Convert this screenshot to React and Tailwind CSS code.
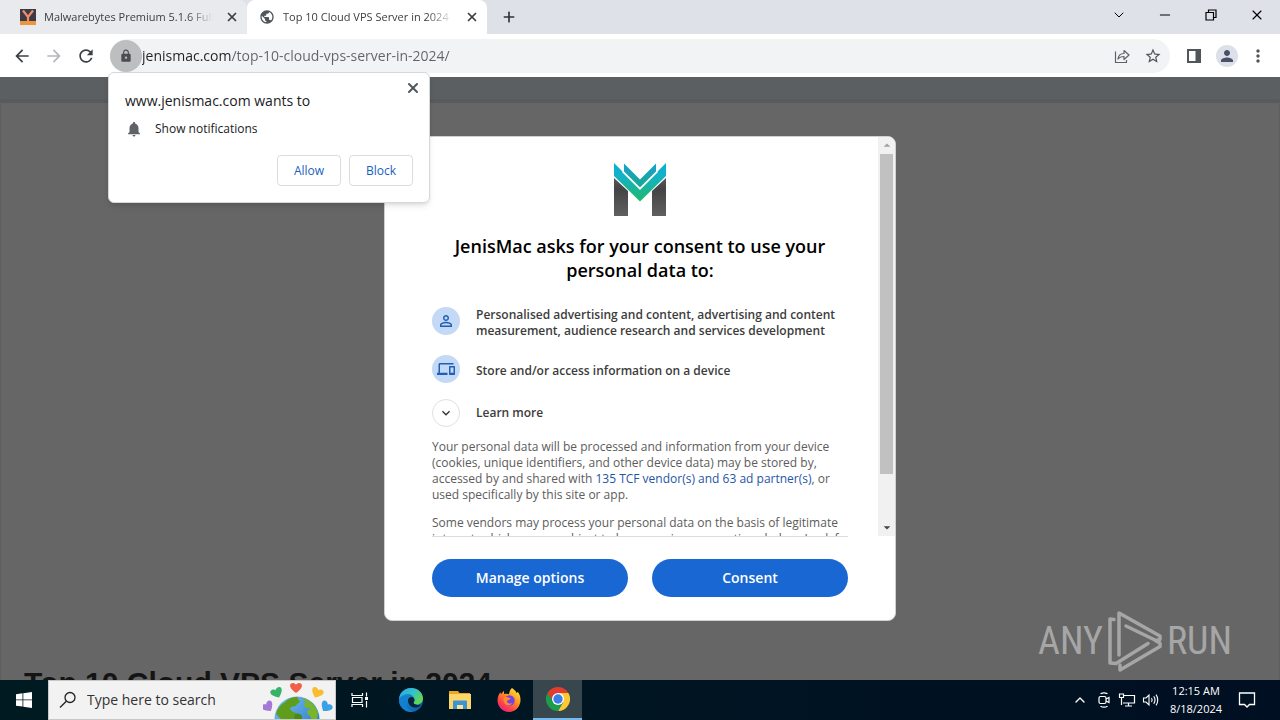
import { LuX, LuPlus, LuChevronDown, LuChevronUp, LuMinus } from "react-icons/lu";
import {
  MdArrowBack,
  MdArrowForward,
  MdRefresh,
  MdLock,
  MdStarBorder,
  MdPerson,
  MdPersonOutline,
  MdMoreVert,
  MdNotifications,
  MdPublic,
  MdDevices,
  MdExpandMore,
  MdArrowDropUp,
  MdArrowDropDown,
} from "react-icons/md";

const MalwareIcon = () => (
  <svg viewBox="0 0 16 16" className="size-4 shrink-0">
    <rect width="16" height="16" fill="#3b3a45" />
    <rect y="12" width="16" height="4" fill="#f0953a" />
    <path d="M3 1.500L8 8l5-6.500M8 7.500V12" fill="none" stroke="#f28c6a" strokeWidth="2.200" />
  </svg>
);

const ShareIcon = () => (
  <svg viewBox="0 0 16 16" className="size-4" fill="none" stroke="#5f6368" strokeWidth="1.200">
    <path d="M1.500 3.500v11h11V12" />
    <path d="M4 11c.4-3.600 2.500-5.400 6-5.500V2.500l5 4.500-5 4.500V8.500c-2.800 0-4.600.7-6 2.500z" strokeLinejoin="round" />
  </svg>
);

const SidePanelIcon = () => (
  <svg viewBox="0 0 16 16" className="size-4">
    <path d="M1 1h14v14H1z" fill="#50565b" />
    <path d="M3 3h6.500v10H3z" fill="#fff" />
  </svg>
);

const JenisMacLogo = () => (
  <svg viewBox="0 0 54 54" className="mx-auto size-[54px]">
    <defs>
      <linearGradient id="wing" x1="0" y1="0" x2="0" y2="1">
        <stop offset="0" stopColor="#0aaed8" />
        <stop offset="0.350" stopColor="#14b2c4" />
        <stop offset="1" stopColor="#1fb96a" />
      </linearGradient>
      <linearGradient id="inner" x1="0" y1="0" x2="0" y2="1">
        <stop offset="0" stopColor="#1a9fd0" />
        <stop offset="1" stopColor="#15ab8c" />
      </linearGradient>
      <linearGradient id="leg" x1="0" y1="0" x2="0" y2="1">
        <stop offset="0" stopColor="#5d5356" />
        <stop offset="0.300" stopColor="#444" />
        <stop offset="1" stopColor="#606060" />
      </linearGradient>
    </defs>
    <path d="M1 15l14 13v25H1zM53 15L39 28v25h14z" fill="url(#leg)" />
    <path d="M1 0l26 26L53 0v13L27 38.500 1 13z" fill="url(#wing)" />
    <path d="M11 0.500l16 16 16-16v8L27 24.500 11 8.500z" fill="url(#inner)" />
    <path d="M9.500 8.500L27 26 44.500 8.500" fill="none" stroke="#fff" strokeWidth="1.500" />
  </svg>
);

const WindowsIcon = () => (
  <svg viewBox="0 0 16 16" className="size-4" fill="#fff">
    <path d="M0 2.200l6.500-.9v6.200H0zM7.300 1.200L16 0v7.500H7.300zM0 8.300h6.500v6.300L0 13.700zM7.300 8.300H16V16l-8.700-1.200z" />
  </svg>
);

const SearchIcon = () => (
  <svg viewBox="0 0 18 18" className="size-[18px] shrink-0" fill="none" stroke="#222" strokeWidth="1.300">
    <circle cx="11" cy="6.500" r="5" />
    <path d="M7.300 10.200L1 16.500" />
  </svg>
);

const Heart = ({ x, y, fill, turn }) => (
  <path
    d="M0 5C-4 2-6-.2-6-2.500-6-5-2-6 0-3.200 2-6 6-5 6-2.500 6-.2 4 2 0 5z"
    fill={fill}
    transform={`translate(${x} ${y}) rotate(${turn})`}
  />
);

const EarthDoodle = () => (
  <svg viewBox="0 0 72 38" className="h-[38px] w-[72px] shrink-0">
    <defs>
      <linearGradient id="sea" x1="0" y1="0" x2="1" y2="1">
        <stop offset="0" stopColor="#7cc0f5" />
        <stop offset="1" stopColor="#1c6fc4" />
      </linearGradient>
    </defs>
    <circle cx="34" cy="38" r="22.500" fill="url(#sea)" />
    <path d="M22 21c3-3.500 8-5 12-5 2 1 0 3 3 4-1 3-4 3-4 5-3 1-5 0-6 3l3 3c2 0 4 2 3 4l-3 3H18l-5-5c1-5 4-9 9-12z" fill="#5f9e1d" />
    <path d="M40 17c7 2 12 7 15 14l-1 7h-6c0-4-4-4-4-7 0-2 3-2 3-4-2-1-3 1-5-1s0-4 1-5c-2-1-3-2-3-4z" fill="#78b52c" />
    <path d="M32 33c3-1 6 0 7 2v3h-8z" fill="#4c8a18" />
    <Heart x={33} y={7} fill="#ef6248" turn={0} />
    <Heart x={14} y={12} fill="#35b368" turn={-25} />
    <Heart x={54} y={12} fill="#fbbc2f" turn={25} />
    <Heart x={5} y={26} fill="#a678d6" turn={-35} />
    <Heart x={63} y={26} fill="#3ba0e4" turn={35} />
  </svg>
);

const TaskViewIcon = () => (
  <svg viewBox="0 0 18 18" className="size-[18px]" fill="none" stroke="#fff" strokeWidth="1.200">
    <path d="M1 2v2.500h10.500V2M1 16v-2.500h10.500V16M1.500 6.500h9.500v5H1.500zM15.500 1.500v4M15.500 10v6.500" />
    <path d="M14 6h3v3h-3z" fill="#fff" stroke="none" />
  </svg>
);

const EdgeIcon = () => (
  <svg viewBox="0 0 24 24" className="size-6">
    <defs>
      <linearGradient id="edgeTop" x1="0" y1="0" x2="1" y2="0.600">
        <stop offset="0" stopColor="#2aa7e8" />
        <stop offset="0.550" stopColor="#33c3c9" />
        <stop offset="1" stopColor="#63d94c" />
      </linearGradient>
      <linearGradient id="edgeLow" x1="0" y1="0" x2="1" y2="1">
        <stop offset="0" stopColor="#1b9de2" />
        <stop offset="1" stopColor="#0c59a4" />
      </linearGradient>
    </defs>
    <circle cx="12" cy="12" r="12" fill="url(#edgeLow)" />
    <path d="M0 11C1 4 6 0 12 0c7 0 12 5 12 10.500 0 3.500-3 6-6 6-2.500 0-4-1-3.500-2 1-1 1-2 1-3C15 8 12 6 8.500 6 4.500 6 1 8.500 0 11z" fill="url(#edgeTop)" />
    <path d="M9 12.500c0-2 1.500-3.500 3.500-3.500 2 .2 3 1.500 3 3 0 1-.5 1.500-1 2.500 0 1.500 2 2.500 4.500 2.500 1.500 0 2.500-.3 3.500-.8-1.500 2.300-4.500 3.800-7 3.300-4-.5-6.500-3.500-6.500-7z" fill="#07243a" />
    <path d="M7 9.500c-2 4 0 12 7 14.200C7 25 0 19 0 11.500 1.500 8.500 5 7.500 9 8z" fill="#1380d0" />
  </svg>
);

const FolderIcon = () => (
  <svg viewBox="0 0 24 24" className="size-6">
    <path d="M1 3h9l1.500 2H22v15H1z" fill="#e9a723" />
    <path d="M1 6h22v15H1z" fill="#fbd669" />
    <path d="M5 13.500c0-.6.400-1 1-1h12c.6 0 1 .4 1 1V21h-4v-4H9v4H5z" fill="#3f93d2" />
    <path d="M9 17h6v4H9z" fill="#fbe49a" />
  </svg>
);

const FirefoxIcon = () => (
  <svg viewBox="0 0 24 24" className="size-6">
    <defs>
      <linearGradient id="fox" x1="0.900" y1="0" x2="0.200" y2="1">
        <stop offset="0" stopColor="#fff03a" />
        <stop offset="0.400" stopColor="#ff9a1f" />
        <stop offset="0.750" stopColor="#ff3f4b" />
        <stop offset="1" stopColor="#e3208b" />
      </linearGradient>
    </defs>
    <path d="M15 0c3 2 4 3.500 4.500 5 1-.2 1-.7 1-1.500 2 2.300 3 5 3 8.500C23.500 18.500 18.500 24 12 24S.5 18.500.5 12.500c0-3 1-6 3-8.500 0 1 .2 1.500.7 2C5 5 6 3.500 7 3v3c2-.5 4-.4 5 .2C12.500 3.500 13 1.500 15 0z" fill="url(#fox)" />
    <circle cx="12.500" cy="12.500" r="5.200" fill="#7542e5" />
    <path d="M7 9.500c2-1 3.500 0 5 .2 1.300.2 2 .8 1 1.600-1 .7-2.500.7-3 2 0 2 3 3 5.500 1.700C14 17.500 11 18 9 16.700 6.500 15 6 12 7 9.500z" fill="#ff8a2a" />
  </svg>
);

const ChromeIcon = () => (
  <svg viewBox="0 0 24 24" className="size-6">
    <path d="M12 12V6h10.400A12 12 0 0 1 12 24l5.200-9z" fill="#fcc934" />
    <path d="M12 12l5.200 3L12 24A12 12 0 0 1 1.600 6l5.200 9z" fill="#1e9b4b" />
    <path d="M1.600 6L6.800 15 12 12V6z" fill="#1e9b4b" />
    <path d="M1.600 6A12 12 0 0 1 22.400 6H12c-2.500 0-5 1.500-6 4.500L5.500 12z" fill="#e33b2e" />
    <circle cx="12" cy="12" r="6" fill="#fff" />
    <circle cx="12" cy="12" r="4.700" fill="#3b7de9" />
  </svg>
);

const CameraIcon = () => (
  <svg viewBox="0 0 16 16" className="size-4" fill="none" stroke="#fff" strokeWidth="1.200">
    <rect x="3" y="4.500" width="7" height="7" rx="1.500" />
    <path d="M10 7l3-1.500v5L10 9M4.500 1.800C6.500.7 9.500.7 11.500 1.800M4.500 14.200c2 1.100 5 1.100 7 0" />
  </svg>
);

const NetworkIcon = () => (
  <svg viewBox="0 0 18 16" className="h-4 w-[18px]" fill="none" stroke="#fff" strokeWidth="1.200">
    <path d="M6 3.500h10.500v7.500H5M10.500 11v3M7 14h7M1.500 2h4v3.500h-4zM3.500 5.500V13" />
  </svg>
);

const VolumeIcon = () => (
  <svg viewBox="0 0 18 16" className="h-4 w-[18px]" fill="none" stroke="#fff" strokeWidth="1.100">
    <path d="M1.500 6h2.500l3-3v10l-3-3H1.500zM9.500 6c.8 1.200.8 2.800 0 4M11.700 4.300c1.600 2.200 1.600 5.200 0 7.400M14 2.700c2.300 3 2.300 7.600 0 10.600" />
  </svg>
);

const NoticeIcon = () => (
  <svg viewBox="0 0 18 18" className="size-[18px]" fill="none" stroke="#fff" strokeWidth="1.300">
    <path d="M1.500 2h15v11.500h-5L9 16l-2.500-2.500h-5z" />
  </svg>
);

const PlayMark = () => (
  <svg viewBox="0 0 56 64" className="h-16 w-14" fill="none" stroke="currentColor" strokeWidth="3.500" strokeLinejoin="round" strokeLinecap="round">
    <path d="M7 10.500L3 10v44l6 .500 32-20" />
    <path d="M12 46V4l41 23v3.500l-4 1L19 17" />
    <path d="M13 56v5l40-23.500V34l-4-2" />
  </svg>
);

const TabStrip = () => (
  <header className="flex h-[34px] shrink-0 items-stretch bg-[#dee1e8]">
    <div className="flex w-[247px] items-center gap-2 rounded-tr-lg bg-[#e8eaed] pr-1 pl-5 text-[11px] text-[#3c4043]">
      <MalwareIcon />
      <span className="flex-1 overflow-hidden mask-r-from-85% whitespace-nowrap">Malwarebytes Premium 5.1.6 Full</span>
      <button aria-label="Close tab" className="p-1 text-[#3c4043]"><LuX className="size-3.5" strokeWidth={3} /></button>
    </div>
    <div className="flex w-60 items-center gap-2 rounded-t-lg bg-white pr-1 pl-3 text-[11px] text-[#3c4043]">
      <MdPublic className="size-4 shrink-0 text-[#50555a]" />
      <span className="flex-1 overflow-hidden mask-r-from-85% whitespace-nowrap">Top 10 Cloud VPS Server in 2024</span>
      <button aria-label="Close tab" className="p-1 text-[#3c4043]"><LuX className="size-3.5" strokeWidth={3} /></button>
    </div>
    <button aria-label="New tab" className="px-3.5 text-[#2f3338]"><LuPlus className="size-4" strokeWidth={2.5} /></button>
    <div className="ml-auto flex items-center text-black">
      <button aria-label="Search tabs" className="flex w-[46px] justify-center pb-1"><LuChevronDown className="size-4" strokeWidth={1.5} /></button>
      <button aria-label="Minimize" className="flex w-[46px] justify-center pb-1"><LuMinus className="size-4" strokeWidth={1.5} /></button>
      <button aria-label="Restore" className="flex w-[46px] justify-center pb-1">
        <svg viewBox="0 0 12 12" className="size-3" fill="none" stroke="#000" strokeWidth="1.200">
          <path d="M1 3.500h7.500V11H1zM3.500 3.500V1H11v7.500H8.500" />
        </svg>
      </button>
      <button aria-label="Close" className="flex w-[46px] justify-center pb-1"><LuX className="size-4" strokeWidth={1.7} /></button>
    </div>
  </header>
);

const Toolbar = () => (
  <div className="flex h-[43px] shrink-0 items-center bg-white pr-3 pl-3 text-[#50555a]">
    <button aria-label="Back" className="mr-3 text-[#3c4043]"><MdArrowBack className="size-5" /></button>
    <button aria-label="Forward" className="mr-3 text-[#b5b7ba]"><MdArrowForward className="size-5" /></button>
    <button aria-label="Reload" className="mr-3.5 text-[#3c4043]"><MdRefresh className="size-5" /></button>
    <div className="flex h-[34px] flex-1 items-center rounded-full bg-[#f1f3f4]">
      <button aria-label="Site information" className="flex size-8 items-center justify-center rounded-full bg-[#bcbebf]">
        <MdLock className="size-3.5 text-[#4a4d51]" />
      </button>
      {/* host part is darker than the path */}
      <input
        aria-label="Address"
        defaultValue="jenismac.com/top-10-cloud-vps-server-in-2024/"
        className="h-8 min-w-0 flex-1 bg-[linear-gradient(90deg,#202124_90px,#5f6368_90px)] bg-clip-text text-sm text-transparent outline-none"
      />
      <button aria-label="Share" className="mr-3.5"><ShareIcon /></button>
      <button aria-label="Bookmark" className="mr-2"><MdStarBorder className="size-[18px]" /></button>
    </div>
    <button aria-label="Side panel" className="ml-4"><SidePanelIcon /></button>
    <button aria-label="Profile" className="ml-3.5 flex size-[22px] items-center justify-center rounded-full bg-[#dde0e8]">
      <MdPerson className="size-[18px] text-[#4a5068]" />
    </button>
    <button aria-label="Menu" className="ml-2.5"><MdMoreVert className="size-5" /></button>
  </div>
);

const PermissionPrompt = () => (
  <div className="absolute top-[72px] left-[108px] z-10 w-[322px] rounded-md border border-[#d5d7da] bg-white px-4 pt-[18px] pb-4 text-[#202124] shadow-md">
    <button aria-label="Dismiss" className="absolute top-[7px] right-2 text-[#50555a]"><LuX className="size-4" strokeWidth={3} /></button>
    <h2 className="text-sm leading-5">www.jenismac.com wants to</h2>
    <p className="mt-2 flex items-center gap-3 text-xs leading-5">
      <MdNotifications className="size-[18px] text-[#5f6368]" />
      Show notifications
    </p>
    <div className="mt-4 flex justify-end gap-2 text-xs font-medium text-[#1a5fc0]">
      <button className="h-[31px] w-16 rounded border border-[#dadce0]">Allow</button>
      <button className="h-[31px] w-16 rounded border border-[#dadce0]">Block</button>
    </div>
  </div>
);

const ConsentDialog = () => (
  <section className="flex w-lg flex-col overflow-hidden rounded-lg border border-[#d0d0d0] bg-white font-['Open_Sans',sans-serif]">
    <div className="flex h-[399px]">
      <div className="flex-1 overflow-hidden pt-[26px] pr-[30px] pl-[47px]">
        <JenisMacLogo />
        <h1 className="mt-[17px] text-center text-lg leading-6 font-semibold text-black">
          JenisMac asks for your consent to use your personal data to:
        </h1>
        <ul className="mt-[25px] space-y-4 text-xs leading-4 font-semibold text-[#3c3c3c]">
          <li className="flex gap-4">
            <span className="flex size-7 shrink-0 items-center justify-center rounded-full bg-[#c3d9f5]">
              <MdPersonOutline className="size-[18px] text-[#1f5fb8]" />
            </span>
            Personalised advertising and content, advertising and content measurement, audience research and services development
          </li>
          <li className="flex items-end gap-4">
            <span className="flex size-7 shrink-0 items-center justify-center rounded-full bg-[#c3d9f5]">
              <MdDevices className="size-[18px] text-[#1f5fb8]" />
            </span>
            <span className="pb-1">Store and/or access information on a device</span>
          </li>
          <li>
            <button className="flex items-center gap-4">
              <span className="flex size-7 shrink-0 items-center justify-center rounded-full border border-[#e0e0e0]">
                <MdExpandMore className="size-4 text-[#333]" />
              </span>
              Learn more
            </button>
          </li>
        </ul>
        <div className="mt-3 space-y-3 text-xs leading-4 text-[#5c5c5c]">
          <p>
            Your personal data will be processed and information from your device (cookies, unique identifiers, and other
            device data) may be stored by, accessed by and shared with{" "}
            <a href="#vendors" className="text-[#1f55a5]">135 TCF vendor(s) and 63 ad partner(s)</a>, or used specifically by
            this site or app.
          </p>
          <p className="-mr-4">
            Some vendors may process your personal data on the basis of legitimate interest, which you can object to by
            managing your options below. Look for
          </p>
        </div>
      </div>
      <div className="flex w-[17px] flex-col items-center bg-[#f1f1f1]">
        <MdArrowDropUp className="h-[17px] w-4 shrink-0 text-[#a0a0a0]" />
        <div className="h-80 w-[13px] bg-[#c1c1c1]" />
        <MdArrowDropDown className="mt-auto h-[17px] w-4 shrink-0 text-[#444]" />
      </div>
    </div>
    <div className="mx-[47px] flex gap-6 border-t border-[#dadce0] pt-[22px] pb-[23px] text-sm font-semibold text-white">
      <button className="h-[38px] flex-1 rounded-full bg-[#1967d2]">Manage options</button>
      <button className="h-[38px] flex-1 rounded-full bg-[#1967d2]">Consent</button>
    </div>
  </section>
);

const Page = () => (
  <main className="relative flex min-h-0 flex-1 flex-col overflow-hidden bg-[#666]">
    <div className="h-[26px] shrink-0 border-b-4 border-[#5a5a5a] bg-[#5b5f61]" />
    <div className="flex flex-1 flex-col border-x border-[#5e5e5e] pt-[33px]">
      <div className="flex justify-center">
        <ConsentDialog />
      </div>
      <h2 className="mt-11 px-[23px] font-['Liberation_Sans',sans-serif] text-3xl leading-9 font-bold text-[#141414]">
        Top 10 Cloud VPS Server in 2024
      </h2>
    </div>
    <div className="absolute right-12 bottom-[7px] flex items-center gap-1 font-['Roboto_Condensed','Roboto',sans-serif] text-[38px] leading-none text-[#a6a6a6]">
      <span>ANY</span>
      <PlayMark />
      <span>RUN</span>
    </div>
  </main>
);

const Taskbar = () => (
  <footer className="flex h-10 shrink-0 items-stretch bg-linear-to-r from-[#001a22] to-[#000f22] text-xs text-white">
    <button aria-label="Start" className="flex w-12 items-center justify-center"><WindowsIcon /></button>
    <label className="flex w-72 items-center border border-[#c8c8c8] bg-[#f2f2f2] pl-2.5">
      <SearchIcon />
      <input
        aria-label="Search"
        placeholder="Type here to search"
        className="ml-2.5 min-w-0 flex-1 text-sm text-[#222] placeholder-[#333] outline-none"
      />
      <EarthDoodle />
    </label>
    <button aria-label="Task view" className="mr-[2px] flex w-12 items-center justify-center"><TaskViewIcon /></button>
    <button aria-label="Edge" className="flex w-[49px] items-center justify-center"><EdgeIcon /></button>
    <button aria-label="File Explorer" className="flex w-[49px] items-center justify-center"><FolderIcon /></button>
    <button aria-label="Firefox" className="flex w-[49px] items-center justify-center"><FirefoxIcon /></button>
    <button aria-label="Chrome" className="flex w-[49px] items-center justify-center border-b-2 border-[#76b9ed] bg-[#37474d]"><ChromeIcon /></button>
    <div className="ml-auto flex items-center gap-1.5 pr-1">
      <button aria-label="Hidden icons" className="mr-0.5"><LuChevronUp className="size-4" strokeWidth={2} /></button>
      <button aria-label="Meet now"><CameraIcon /></button>
      <button aria-label="Network"><NetworkIcon /></button>
      <button aria-label="Volume"><VolumeIcon /></button>
      <div className="w-[60px] text-center text-[11px] leading-[18px] whitespace-nowrap">
        <div>12:15 AM</div>
        <div>8/18/2024</div>
      </div>
      <button aria-label="Notifications" className="ml-1.5 mr-5"><NoticeIcon /></button>
    </div>
  </footer>
);

const App = () => {
  return (
    <div className="relative flex h-screen flex-col overflow-hidden bg-white font-['Open_Sans','Noto_Sans',sans-serif]">
      <TabStrip />
      <Toolbar />
      <PermissionPrompt />
      <Page />
      <Taskbar />
    </div>
  );
};

export default App;
